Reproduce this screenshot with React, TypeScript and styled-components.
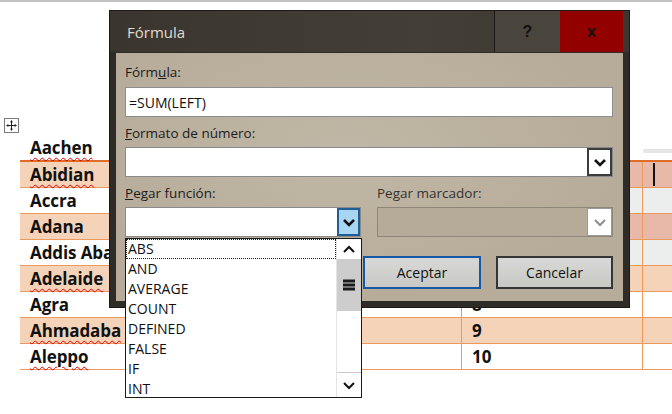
import styled, { createGlobalStyle } from "styled-components";

const GlobalStyle = createGlobalStyle`
  html, body {
    margin: 0;
    padding: 0;
    background: #fff;
  }
  body {
    font-family: "Open Sans", "Noto Sans", sans-serif;
  }
`;

type City = { name: string; wrong?: boolean; num?: number };

// names as far as they show beside the dialog; only the numbers below it can be seen
const cities: City[] = [
  { name: "Abidian", wrong: true },
  { name: "Accra" },
  { name: "Adana" },
  { name: "Addis Aba" },
  { name: "Adelaide", wrong: true },
  { name: "Agra", num: 8 },
  { name: "Ahmadaba", wrong: true, num: 9 },
  { name: "Aleppo", wrong: true, num: 10 },
];

const functions = ["ABS", "AND", "AVERAGE", "COUNT", "DEFINED", "FALSE", "IF", "INT"];

const Chevron = ({
  dir = "down",
  color = "#111",
  weight = 2.6,
}: {
  dir?: "up" | "down";
  color?: string;
  weight?: number;
}) => (
  <svg width="14" height="9" viewBox="0 0 14 9">
    <path
      d={dir === "down" ? "M2 2 L7 7 L12 2" : "M2 7 L7 2 L12 7"}
      fill="none"
      stroke={color}
      strokeWidth={weight}
    />
  </svg>
);

const App = () => {
  return (
    <>
      <GlobalStyle />
      <Page>
        <TopRule />
        <Doc>
          <Handle>
            <svg width="11" height="11" viewBox="0 0 11 11">
              <path d="M5.5 0.5 V10.5 M0.5 5.5 H10.5" stroke="#222" strokeWidth="1" />
              <path d="M5.5 0.5 L3.8 2.3 H7.2 Z M5.5 10.5 L3.8 8.7 H7.2 Z M0.5 5.5 L2.3 3.8 V7.2 Z M10.5 5.5 L8.7 3.8 V7.2 Z" fill="#222" />
            </svg>
          </Handle>
          <Table>
            <HeaderRow>
              <Cell>
                <Word $wrong>Aachen</Word>
              </Cell>
              <Cell />
              <Cell />
              <Cell $band />
            </HeaderRow>
            {cities.map((c, i) => {
              const shaded = i % 2 === 0;
              const tint = i < 4 ? (shaded ? "#e8b9a9" : "#eceeed") : undefined;
              return (
                <Row key={c.name} $shaded={shaded}>
                  <Cell>
                    <Word $wrong={c.wrong}>{c.name}</Word>
                  </Cell>
                  <Cell $divider />
                  <Cell $divider $tint={tint}>
                    {c.num}
                  </Cell>
                  <Cell $tint={tint}>{i === 0 && <Caret />}</Cell>
                </Row>
              );
            })}
          </Table>
        </Doc>

        <Dialog>
          <TitleBar>
            <Title>Fórmula</Title>
            <HelpButton>?</HelpButton>
            <CloseButton>x</CloseButton>
          </TitleBar>
          <Body>
            <Label>
              Fórm<u>u</u>la:
            </Label>
            <TextBox>=SUM(LEFT)</TextBox>
            <Label $gap={7}>
              <u>F</u>ormato de número:
            </Label>
            <SelectBox>
              <DropButton $w={25} $border="#3c3c3c" $bg="#fff">
                <Chevron />
              </DropButton>
            </SelectBox>
            <PairRow>
              <Group>
                <Label>
                  <u>P</u>egar función:
                </Label>
                <ComboWrap>
                  <SelectBox>
                    <DropButton $w={23} $border="#1f5f96" $bg="#a8d5f2">
                      <Chevron />
                    </DropButton>
                  </SelectBox>
                  <List>
                    <Items>
                      {functions.map((f, i) => (
                        <Item key={f} $focused={i === 0}>
                          {f}
                        </Item>
                      ))}
                    </Items>
                    <Scrollbar>
                      <ScrollArrow>
                        <Chevron dir="up" weight={2} />
                      </ScrollArrow>
                      <Thumb>
                        <svg width="12" height="12" viewBox="0 0 12 12">
                          <rect x="0" y="0.5" width="12" height="3" fill="#1a1a1a" />
                          <rect x="0" y="4.5" width="12" height="3" fill="#1a1a1a" />
                          <rect x="0" y="8.5" width="12" height="3" fill="#1a1a1a" />
                        </svg>
                      </Thumb>
                      <Track />
                      <ScrollArrow $bottom>
                        <Chevron weight={2} />
                      </ScrollArrow>
                    </Scrollbar>
                  </List>
                </ComboWrap>
              </Group>
              <Group>
                <Label $muted>Pegar marcador:</Label>
                <SelectBox $disabled>
                  <DropButton $w={25} $border="#9a9a9a" $bg="#fff" $thin>
                    <Chevron color="#8d8d8d" weight={2} />
                  </DropButton>
                </SelectBox>
              </Group>
            </PairRow>
            <Buttons>
              <PushButton $w={118} $border="#1758a6">
                Aceptar
              </PushButton>
              <PushButton $w={117} $border="#353535">
                Cancelar
              </PushButton>
            </Buttons>
          </Body>
        </Dialog>
      </Page>
    </>
  );
};

export default App;

// Styled Components
const Page = styled.div`
  position: relative;
  width: 672px;
  height: 414px;
  overflow: hidden;
  background: #fff;
`;

const TopRule = styled.div`
  height: 2px;
  background: #c3c3c3;
`;

const Doc = styled.div`
  padding: 116px 0 0 4px;
`;

const Handle = styled.div`
  width: 15px;
  height: 15px;
  box-sizing: border-box;
  border: 1px solid #7a7a7a;
  display: flex;
  align-items: center;
  justify-content: center;
`;

const Table = styled.div`
  margin: 2px 0 0 16px;
  width: 700px;
`;

const Row = styled.div<{ $shaded?: boolean }>`
  display: grid;
  grid-template-columns: 220px 222px 181px 77px;
  height: 26px;
  box-sizing: border-box;
  border-bottom: 1px solid #eb9a5b;
  background: ${(p) => (p.$shaded ? "#f4d3b8" : "#fff")};
`;

const HeaderRow = styled(Row)`
  height: 27px;
  border-bottom: 2px solid #de6e27;
  background: #fff;
`;

const Cell = styled.div<{ $divider?: boolean; $tint?: string; $band?: boolean }>`
  display: flex;
  align-items: center;
  box-sizing: border-box;
  padding-left: 10px;
  border-right: ${(p) => (p.$divider ? "1px solid #eb9a5b" : "none")};
  background: ${(p) =>
    p.$tint ??
    (p.$band
      ? "linear-gradient(#fff 0, #fff 14px, #e6e6e6 14px, #e6e6e6 18px, #fff 18px)"
      : "transparent")};
  font-weight: 700;
  font-size: 17px;
  color: #111;
  white-space: nowrap;
`;

const Word = styled.span<{ $wrong?: boolean }>`
  letter-spacing: -0.1px;
  text-decoration: ${(p) => (p.$wrong ? "underline wavy #e00000" : "none")};
  text-decoration-thickness: 1px;
  text-underline-offset: 3px;
`;

const Caret = styled.span`
  display: block;
  width: 2px;
  height: 23px;
  background: #111;
`;

const Dialog = styled.div`
  position: absolute;
  left: 109px;
  top: 10px;
  width: 521px;
  height: 298px;
  box-sizing: border-box;
  display: flex;
  flex-direction: column;
  background: #2f2c27;
  border: 1px solid #1c1a17;
`;

const TitleBar = styled.div`
  display: flex;
  height: 41px;
  padding-right: 6px;
  background: linear-gradient(90deg, #3a362f, #433f37 60%, #3b3730);
`;

const Title = styled.div`
  flex: 1;
  display: flex;
  align-items: center;
  padding-left: 17px;
  font-size: 15px;
  color: #e0dbd1;
`;

const HelpButton = styled.div`
  width: 65px;
  display: flex;
  align-items: center;
  justify-content: center;
  border-left: 1px solid #1b1a17;
  background: #49453c;
  color: #111;
  font-family: "Liberation Sans", sans-serif;
  font-weight: 700;
  font-size: 16px;
`;

const CloseButton = styled(HelpButton)`
  width: 63px;
  border-left: none;
  background: #930000;
`;

const Body = styled.div`
  flex: 1;
  margin: 1px 6px 6px 6px;
  padding: 10px 10px 0 9px;
  background: radial-gradient(ellipse at 45% 40%, #c1b7a6, #b7ac99 70%);
  display: flex;
  flex-direction: column;
`;

const Label = styled.div<{ $gap?: number; $muted?: boolean }>`
  margin-top: ${(p) => p.$gap ?? 0}px;
  height: 18px;
  font-size: 13.5px;
  line-height: 18px;
  color: ${(p) => (p.$muted ? "#343230" : "#1c1c1c")};
`;

const TextBox = styled.div`
  margin-top: 6px;
  height: 30px;
  box-sizing: border-box;
  border: 1px solid #8d8d8d;
  background: #fff;
  padding-left: 3px;
  display: flex;
  align-items: center;
  font-size: 14px;
  color: #111;
`;

const SelectBox = styled.div<{ $disabled?: boolean }>`
  margin-top: 5px;
  height: 30px;
  box-sizing: border-box;
  display: flex;
  justify-content: flex-end;
  border: 1px solid ${(p) => (p.$disabled ? "#8e8779" : "#8a8a8a")};
  background: ${(p) => (p.$disabled ? "#b6ab98" : "#fff")};
`;

const DropButton = styled.div<{ $w: number; $border: string; $bg: string; $thin?: boolean }>`
  width: ${(p) => p.$w}px;
  height: 100%;
  box-sizing: border-box;
  display: flex;
  align-items: center;
  justify-content: center;
  border: ${(p) => (p.$thin ? 1 : 2)}px solid ${(p) => p.$border};
  background: ${(p) => p.$bg};
`;

const PairRow = styled.div`
  display: flex;
  gap: 16px;
  margin-top: 7px;
`;

const Group = styled.div`
  width: 236px;
  display: flex;
  flex-direction: column;
`;

const ComboWrap = styled.div`
  position: relative;
`;

const List = styled.div`
  position: absolute;
  top: calc(100% + 1px);
  left: 0;
  width: 237px;
  height: 160px;
  box-sizing: border-box;
  display: flex;
  border: 1px solid #1a1a1a;
  background: #fff;
  z-index: 2;
`;

const Items = styled.div`
  flex: 1;
  display: flex;
  flex-direction: column;
`;

const Item = styled.div<{ $focused?: boolean }>`
  height: 20px;
  box-sizing: border-box;
  padding-left: 2px;
  line-height: 20px;
  font-size: 14px;
  color: #111;
  outline: ${(p) => (p.$focused ? "1px dotted #222" : "none")};
  outline-offset: -1px;
`;

const Scrollbar = styled.div`
  width: 24px;
  display: flex;
  flex-direction: column;
  border-left: 1px solid #e4e4e4;
`;

const ScrollArrow = styled.div<{ $bottom?: boolean }>`
  height: ${(p) => (p.$bottom ? 24 : 20)}px;
  display: flex;
  align-items: center;
  justify-content: center;
  background: #fff;
  border-top: ${(p) => (p.$bottom ? "1px solid #c9c9c9" : "none")};
`;

const Thumb = styled.div`
  height: 52px;
  display: flex;
  align-items: center;
  justify-content: center;
  background: #cdcdcd;
`;

const Track = styled.div`
  flex: 1;
  background: #fff;
`;

const Buttons = styled.div`
  display: flex;
  justify-content: flex-end;
  gap: 15px;
  margin-top: 19px;
`;

const PushButton = styled.div<{ $w: number; $border: string }>`
  width: ${(p) => p.$w}px;
  height: 33px;
  box-sizing: border-box;
  display: flex;
  align-items: center;
  justify-content: center;
  border: 2px solid ${(p) => p.$border};
  background: linear-gradient(#d8d9d6, #c8c9c5);
  font-size: 14px;
  color: #111;
`;
